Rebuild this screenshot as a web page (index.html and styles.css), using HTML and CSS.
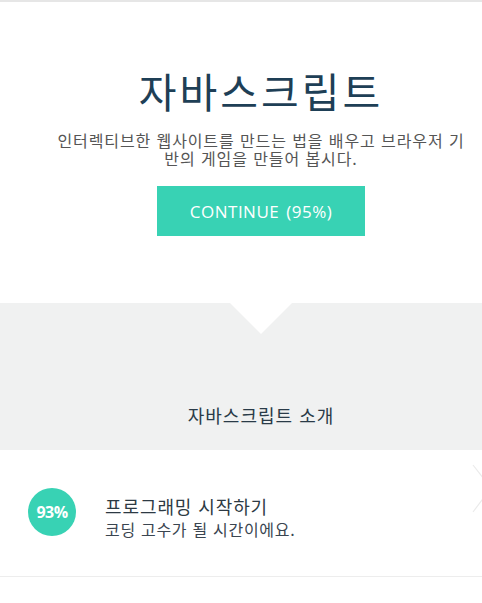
FILE: index.html
```html
<!DOCTYPE html>
<html lang="ko">
<head>
<meta charset="utf-8">
<title>자바스크립트</title>
<link rel="stylesheet" href="styles.css">
</head>
<body>
<div class="page">
  <div class="topbar"></div>
  <section class="hero">
    <h1 class="hero-title">자바스크립트</h1>
    <p class="hero-desc">인터렉티브한 웹사이트를 만드는 법을 배우고 브라우저 기반의 게임을 만들어 봅시다.</p>
    <a class="btn" href="#">CONTINUE (95%)</a>
  </section>
  <section class="intro">
    <div class="notch"></div>
    <h2 class="intro-title">자바스크립트 소개</h2>
  </section>
  <div class="lesson">
    <div class="badge">93%</div>
    <div class="lesson-text">
      <div class="lesson-title">프로그래밍 시작하기</div>
      <div class="lesson-sub">코딩 고수가 될 시간이에요.</div>
    </div>
    <svg class="chev" width="24" height="52" viewBox="0 0 24 52"><path d="M1 1 L19 24 L1 48" fill="none" stroke="#ebebeb" stroke-width="1.2"/></svg>
  </div>
</div>
</body>
</html>
```
FILE: styles.css
```css
html, body {
  margin: 0;
  padding: 0;
  overflow: hidden;
  background: #fff;
}
body {
  font-family: "Noto Sans CJK KR", "Noto Sans", sans-serif;
}
.page {
  width: 522px;
}
.topbar {
  height: 2px;
  background: #e6e6e6;
}
.hero {
  padding-top: 64px;
  display: flex;
  flex-direction: column;
  align-items: center;
}
.hero-title {
  margin: 0;
  font-size: 41px;
  line-height: 48px;
  font-weight: 400;
  letter-spacing: 3px;
  color: #1e3f56;
}
.hero-desc {
  margin: 17px 0 0;
  width: 414px;
  font-size: 16px;
  line-height: 18px;
  letter-spacing: 0.9px;
  color: #555;
  text-align: center;
}
.btn {
  margin-top: 19px;
  width: 208px;
  height: 50px;
  display: flex;
  align-items: center;
  justify-content: center;
  background: #38d2b4;
  color: #fff;
  text-decoration: none;
  font-family: "Open Sans", sans-serif;
  font-size: 17px;
  letter-spacing: 0.5px;
  word-spacing: 2px;
}
.intro {
  margin-top: 67px;
  height: 147px;
  background: #f0f1f1;
  position: relative;
  display: flex;
  justify-content: center;
}
.notch {
  position: absolute;
  top: 0;
  left: 230px;
  width: 0;
  height: 0;
  border-left: 31px solid transparent;
  border-right: 31px solid transparent;
  border-top: 31px solid #fff;
}
.intro-title {
  margin: 100px 0 0;
  font-size: 18px;
  line-height: 24px;
  font-weight: 400;
  letter-spacing: 1px;
  color: #2a3b48;
}
.lesson {
  position: relative;
  height: 126px;
  border-bottom: 1px solid #ededed;
  display: flex;
  align-items: center;
  padding-left: 28px;
}
.badge {
  width: 48px;
  height: 48px;
  border-radius: 50%;
  background: #38d2b4;
  color: #fff;
  font-family: "Open Sans", sans-serif;
  font-weight: 700;
  font-size: 16px;
  letter-spacing: -0.6px;
  display: flex;
  align-items: center;
  justify-content: center;
  margin-top: -2px;
}
.lesson-text {
  margin-left: 29px;
  margin-top: 8px;
}
.lesson-title {
  font-size: 18px;
  line-height: 24px;
  letter-spacing: 0.9px;
  color: #2d3a44;
}
.lesson-sub {
  font-size: 16px;
  line-height: 22px;
  letter-spacing: 0.7px;
  color: #3a4550;
}
.chev {
  position: absolute;
  left: 472px;
  top: 14px;
}
```
